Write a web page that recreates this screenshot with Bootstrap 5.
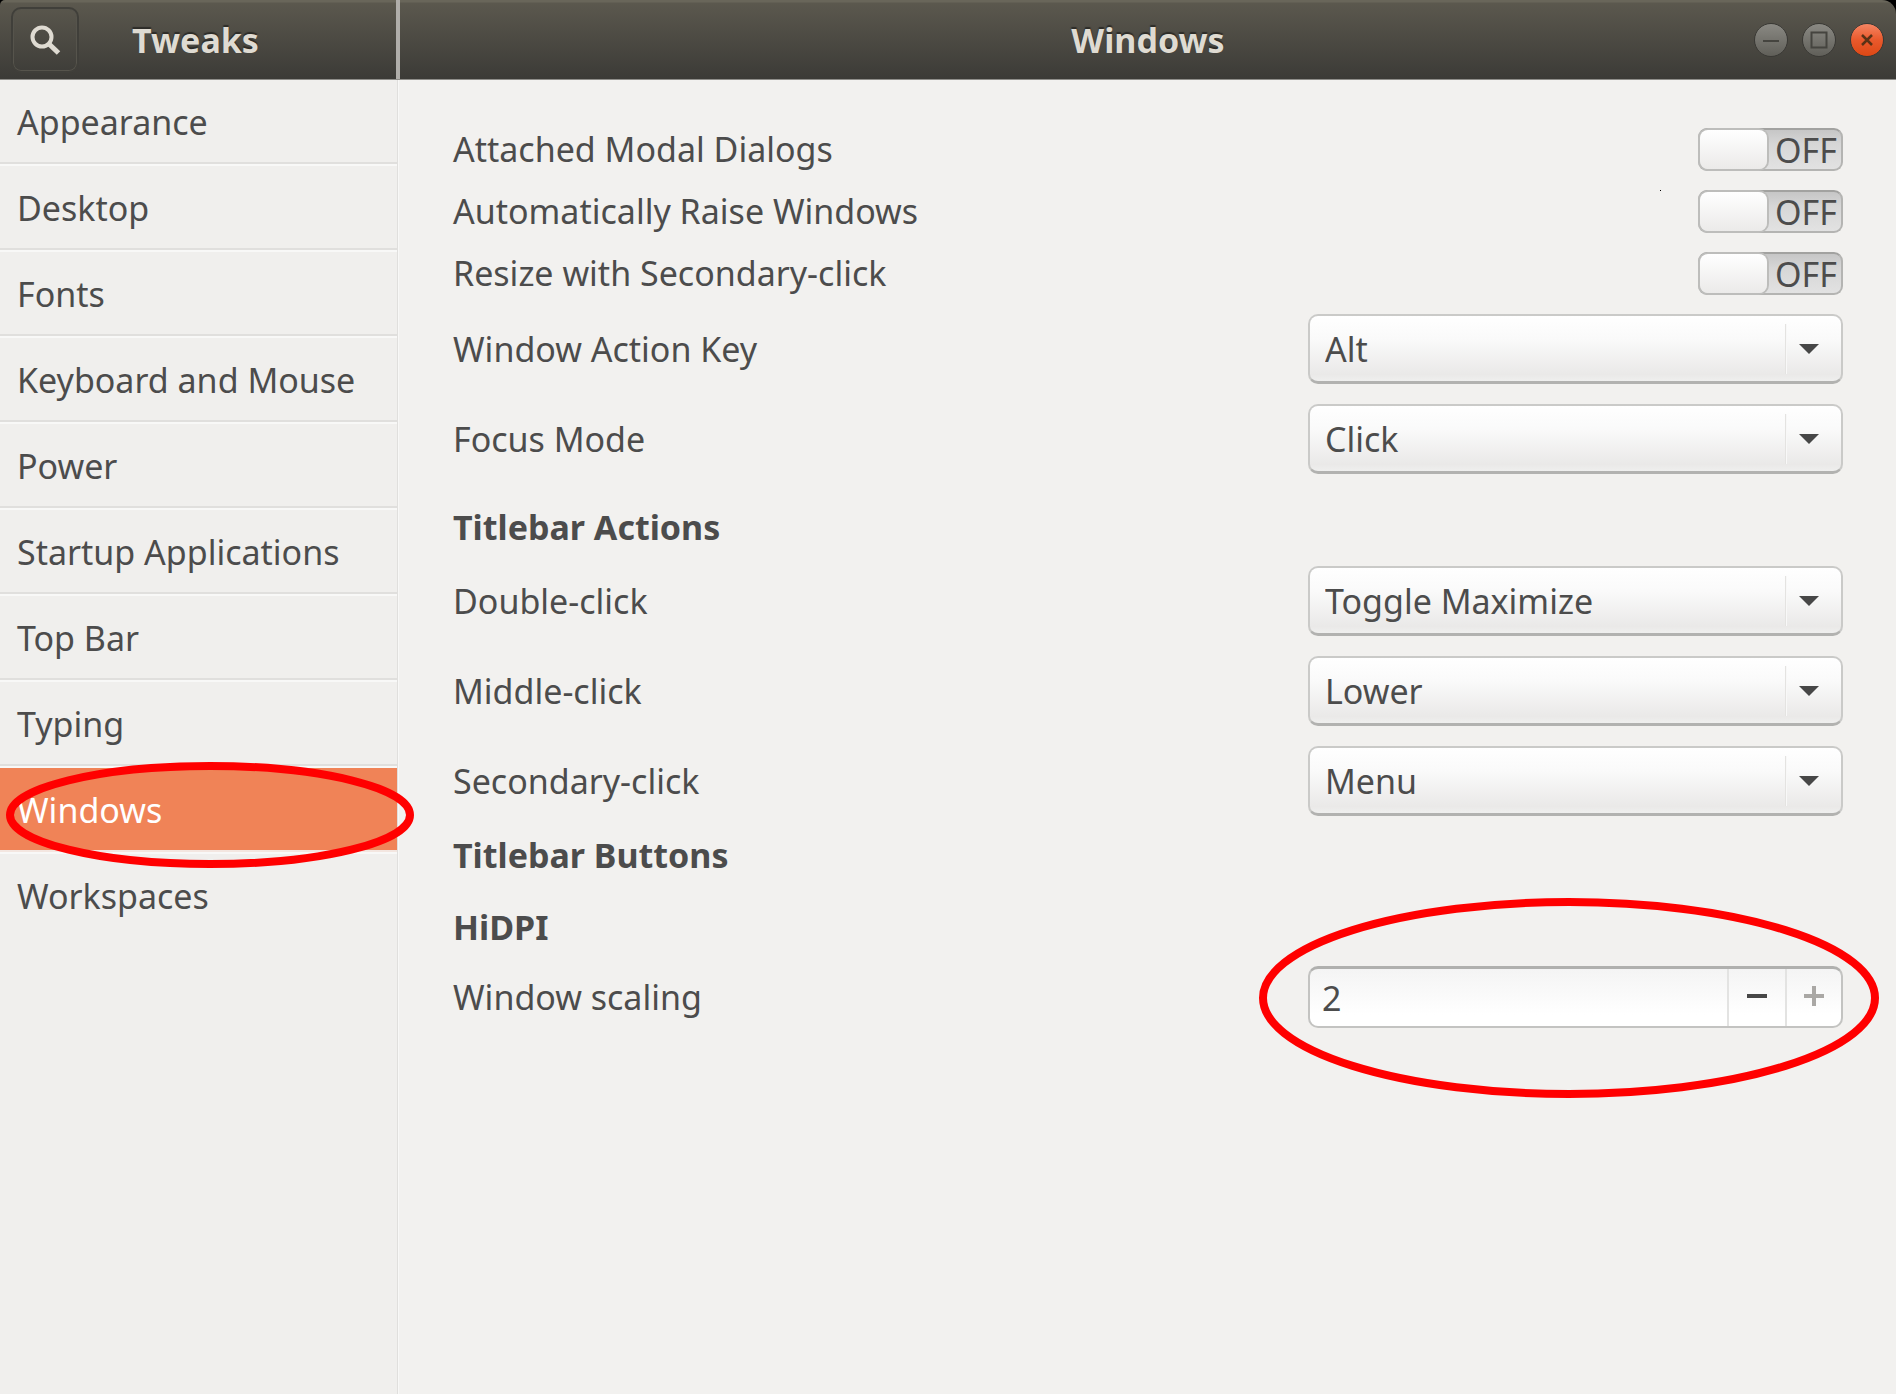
<!DOCTYPE html>
<html lang="en">
<head>
<meta charset="utf-8">
<meta name="viewport" content="width=device-width, initial-scale=1">
<title>Tweaks</title>
<link rel="stylesheet" href="https://cdn.jsdelivr.net/npm/bootstrap@5.3.0/dist/css/bootstrap.min.css">
<style>
  :root { --ink: #4c4c4c; --side: 398px; }
  body { background: #f2f1ef; color: var(--ink); font: 34px/46px "Noto Sans", sans-serif; overflow-x: hidden; }
  .titlebar { height: 80px; background: linear-gradient(#69665a 0, #69665a 2px, #5b584e 3px, #3c3b37 78px); border-bottom: 1px solid #8f8e8a; }
  .titlebar-shell { background: #000; }
  .titlebar { border-radius: 5px 14px 0 0; }
  .titlebar h1, .titlebar h2 { font-size: 34px; line-height: 46px; font-weight: 700; color: #dfdbd2; text-shadow: 0 -2px 1px #2d2c28; }
  .side-head { width: calc(var(--side) + 2px); border-right: 4px solid #b0aeaa; padding-left: 11px; }
  .find-btn { width: 68px; height: 66px; border: 2px solid #403f3a; border-radius: 10px; box-shadow: inset 0 0 0 1px #56544c; background: transparent; }
  .head-pad { width: 84px; }
  .wm-pad, .wm-set { width: 142px; }
  .wm-set { gap: 14px; }
  .wm-btn { width: 34px; height: 34px; border: 1px solid #3a3935; border-radius: 50%; background: linear-gradient(#8a8983, #605f59); }
  .wm-close { background: linear-gradient(#f58563, #e9592c 50%, #dd4814); }
  .sidebar { width: var(--side); background: #f0efed; border-right: 1px solid #e0dfdd; flex: none; box-shadow: 1px 0 #f8f8f7; }
  .side-item { height: 86px; border-bottom: 2px solid #f8f8f7; position: relative; }
  .side-item a { display: block; height: 84px; padding: 19px 17px 15px; border-bottom: 2px solid #e0dfdd; color: var(--ink); text-decoration: none; }
  .side-item.picked a { background: #f08357; color: #fff; border-bottom-color: #f3e6e0; }
  .side-item:last-child, .side-item:last-child a { border-color: transparent; }
  .settings { padding: 48px 53px 48px 55px; gap: 20px; min-width: 0; }
  .ctl { width: 535px; flex: none; position: relative; }
  .row-toggle { height: 42px; }
  .row-combo { height: 70px; }
  .row-spin { height: 62px; }
  .group-head { font-size: 34px; line-height: 38px; font-weight: 700; margin: 0; }
  .group-head.spaced { margin-top: 14px; }
  .toggle { position: relative; width: 145px; height: 43px; border: 2px solid #b4b4b2; border-top-color: #a2a2a0; border-radius: 9px; background: linear-gradient(#c6c6c6, #d6d6d6 35%, #e2e2e2); }
  .toggle input { position: absolute; inset: 0; width: 100%; height: 100%; margin: 0; opacity: 0; }
  .toggle-knob { width: 67px; border-radius: 8px; background: linear-gradient(#fff, #ebeae9); box-shadow: 0 0 0 2px #bdbdbb; }
  .toggle-text { flex: 1; text-align: center; line-height: 40px; padding-left: 4px; }
  .combo select { height: 70px; padding: 2px 68px 0 15px; font-size: 34px; color: var(--ink); border: 2px solid #cacac8; border-bottom: 3px solid #b2b2b0; border-radius: 10px; background: linear-gradient(#fff, #fafafa 35%, #eae9e8 90%, #efefee); }
  .combo::before { content: ""; position: absolute; right: 56px; top: 10px; bottom: 10px; width: 2px; background: #e4e3e1; border-right: 1px solid #f8f8f8; }
  .combo::after { content: ""; position: absolute; right: 24px; top: 30px; width: 20px; height: 10px; background: #474747; clip-path: polygon(0 0, 100% 0, 50% 100%); }
  .spin { height: 62px; border: 2px solid #c3c3c1; border-top: 3px solid #b0b0ae; border-radius: 10px; background: linear-gradient(#f4f4f4, #fff 80%); }
  .spin input { min-width: 0; border: 0; background: transparent; color: var(--ink); font-size: 34px; padding: 0 12px; }
  .spin button { width: 58px; flex: none; border: 0; border-left: 2px solid #e3e3e2; background: transparent; padding: 0; }
  .spin button + button { width: 56px; }
  .spin button svg { display: block; margin: 0 auto 4px; }
  .ring { position: absolute; z-index: 5; pointer-events: none; overflow: visible; }
  .ring ellipse { fill: none; stroke: #f00; stroke-width: 8px; }
  .ring-side { left: 6px; top: -6px; }
  .ring-spin { left: -49px; top: -68px; }
  .speck { position: absolute; width: 1px; height: 1px; background: #000; left: -40px; top: -2px; }
</style>
</head>
<body>
<div class="min-vh-100 d-flex flex-column">
  <div class="titlebar-shell">
    <header class="titlebar d-flex">
      <div class="side-head d-flex align-items-center flex-shrink-0">
        <button type="button" class="find-btn d-flex align-items-center justify-content-center p-0" aria-label="Search">
          <svg width="32" height="32" viewBox="0 0 32 32" fill="none" stroke="#dfdbd2" aria-hidden="true"><circle cx="13" cy="13" r="9.500" stroke-width="4"/><path d="M19.500 19.500 29.500 29" stroke-width="5"/></svg>
        </button>
        <h1 class="flex-fill text-center m-0">Tweaks</h1>
        <span class="head-pad"></span>
      </div>
      <div class="d-flex align-items-center flex-fill">
        <span class="wm-pad"></span>
        <h2 class="flex-fill text-center m-0">Windows</h2>
        <div class="wm-set d-flex">
          <button type="button" class="wm-btn p-0 d-flex" aria-label="Minimize"><svg class="m-auto" width="20" height="20" stroke="#45443f" stroke-width="2" aria-hidden="true"><path d="M2 11h16"/></svg></button>
          <button type="button" class="wm-btn p-0 d-flex" aria-label="Maximize"><svg class="m-auto" width="20" height="20" stroke="#45443f" stroke-width="2" fill="none" aria-hidden="true"><path d="M2.500 2.500h15v15h-15z"/></svg></button>
          <button type="button" class="wm-btn wm-close p-0 d-flex" aria-label="Close"><svg class="m-auto" width="20" height="20" stroke="#5a3216" stroke-width="2.500" aria-hidden="true"><path d="M5 5l10 10M15 5 5 15"/></svg></button>
        </div>
      </div>
    </header>
  </div>
  <div class="d-flex flex-fill">
    <nav class="sidebar" aria-label="Categories">
      <ul class="list-unstyled m-0">
        <li class="side-item"><a href="#">Appearance</a></li>
        <li class="side-item"><a href="#">Desktop</a></li>
        <li class="side-item"><a href="#">Fonts</a></li>
        <li class="side-item"><a href="#">Keyboard and Mouse</a></li>
        <li class="side-item"><a href="#">Power</a></li>
        <li class="side-item"><a href="#">Startup Applications</a></li>
        <li class="side-item"><a href="#">Top Bar</a></li>
        <li class="side-item"><a href="#">Typing</a></li>
        <li class="side-item picked"><a href="#" aria-current="page">Windows</a>
          <svg class="ring ring-side" width="408" height="106" aria-hidden="true"><ellipse cx="204" cy="53" rx="200" ry="49"/></svg></li>
        <li class="side-item"><a href="#">Workspaces</a></li>
      </ul>
    </nav>
    <main class="settings d-flex flex-column flex-fill">
      <div class="row-toggle d-flex align-items-center justify-content-between">
        <label for="modal">Attached Modal Dialogs</label>
        <div class="toggle d-flex"><input type="checkbox" role="switch" id="modal"><span class="toggle-knob"></span><span class="toggle-text">OFF</span></div>
      </div>
      <div class="row-toggle d-flex align-items-center justify-content-between">
        <label for="raise">Automatically Raise Windows</label>
        <div class="toggle d-flex"><span class="speck"></span><input type="checkbox" role="switch" id="raise"><span class="toggle-knob"></span><span class="toggle-text">OFF</span></div>
      </div>
      <div class="row-toggle d-flex align-items-center justify-content-between">
        <label for="resize">Resize with Secondary-click</label>
        <div class="toggle d-flex"><input type="checkbox" role="switch" id="resize"><span class="toggle-knob"></span><span class="toggle-text">OFF</span></div>
      </div>
      <div class="row-combo d-flex align-items-center justify-content-between">
        <label for="key">Window Action Key</label>
        <div class="ctl combo"><select class="form-select" id="key"><option>Alt</option></select></div>
      </div>
      <div class="row-combo d-flex align-items-center justify-content-between">
        <label for="focus">Focus Mode</label>
        <div class="ctl combo"><select class="form-select" id="focus"><option>Click</option></select></div>
      </div>
      <h3 class="group-head spaced">Titlebar Actions</h3>
      <div class="row-combo d-flex align-items-center justify-content-between">
        <label for="dbl">Double-click</label>
        <div class="ctl combo"><select class="form-select" id="dbl"><option>Toggle Maximize</option></select></div>
      </div>
      <div class="row-combo d-flex align-items-center justify-content-between">
        <label for="mid">Middle-click</label>
        <div class="ctl combo"><select class="form-select" id="mid"><option>Lower</option></select></div>
      </div>
      <div class="row-combo d-flex align-items-center justify-content-between">
        <label for="sec">Secondary-click</label>
        <div class="ctl combo"><select class="form-select" id="sec"><option>Menu</option></select></div>
      </div>
      <h3 class="group-head">Titlebar Buttons</h3>
      <h3 class="group-head spaced">HiDPI</h3>
      <div class="row-spin d-flex align-items-center justify-content-between">
        <label for="scale">Window scaling</label>
        <div class="ctl">
          <div class="spin d-flex">
            <input class="flex-fill" type="text" inputmode="numeric" id="scale" value="2">
            <button type="button" aria-label="Decrease"><svg width="22" height="22" stroke="#474747" stroke-width="4" aria-hidden="true"><path d="M1 11h20"/></svg></button>
            <button type="button" aria-label="Increase"><svg width="22" height="22" stroke="#aaa8a5" stroke-width="4" aria-hidden="true"><path d="M1 11h20M11 1v20"/></svg></button>
          </div>
          <svg class="ring ring-spin" width="621" height="200" aria-hidden="true"><ellipse cx="310" cy="100" rx="306" ry="96"/></svg>
        </div>
      </div>
    </main>
  </div>
</div>
<script src="https://cdn.jsdelivr.net/npm/bootstrap@5.3.0/dist/js/bootstrap.bundle.min.js"></script>
</body>
</html>
